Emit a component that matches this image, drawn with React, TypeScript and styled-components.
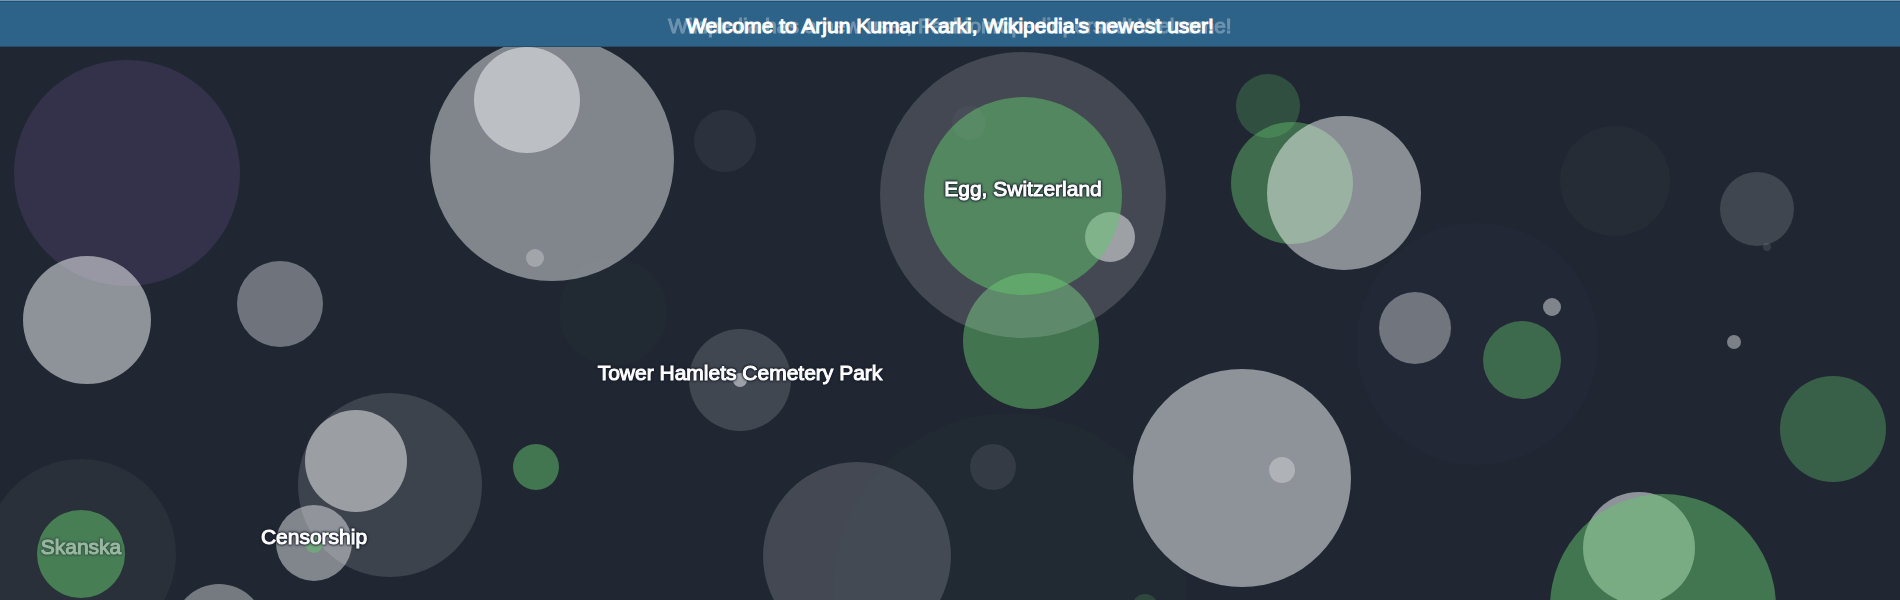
import React from "react";
import styled, { createGlobalStyle } from "styled-components";

const BAR_HEIGHT = 47;

const palette = {
  edit: "#fcfeff",
  anon: "#64c66e",
  bot: "#8f6cbc",
};

type Kind = keyof typeof palette;

interface Edit {
  kind: Kind;
  x: number;
  y: number;
  r: number;
  alpha: number;
  title?: string;
  fade?: number;
}

const edit = (kind: Kind, x: number, y: number, r: number, alpha: number, title?: string, fade?: number): Edit => ({
  kind, x, y, r, alpha, title, fade,
});

// Oldest first, so that later bubbles are painted over earlier ones.
const edits: Edit[] = [
  edit("anon", 613, 312, 54, 0.014),
  edit("anon", 1010, 590, 177, 0.016),
  edit("bot", 1477, 344, 121, 0.032),
  edit("edit", 1615, 181, 55, 0.022),
  edit("bot", 127, 173, 113, 0.18),
  edit("edit", 87, 320, 64, 0.5),
  edit("edit", 280, 304, 43, 0.36),
  edit("edit", 552, 159, 122, 0.44),
  edit("edit", 527, 100, 53, 0.48),
  edit("edit", 535, 258, 9, 0.27),
  edit("edit", 725, 141, 31, 0.055),
  edit("anon", 1031, 341, 68, 0.49),
  edit("edit", 1023, 195, 143, 0.155),
  edit("edit", 1110, 237, 25, 0.485),
  edit("anon", 1023, 196, 99, 0.5, "Egg, Switzerland"),
  edit("edit", 969, 123, 17, 0.03),
  edit("anon", 1268, 106, 32, 0.26),
  edit("anon", 1292, 183, 61, 0.44),
  edit("edit", 1344, 193, 77, 0.48),
  edit("edit", 1415, 328, 36, 0.36),
  edit("edit", 1552, 307, 9, 0.43),
  edit("anon", 1522, 360, 39, 0.41),
  edit("edit", 1757, 209, 37, 0.145),
  edit("edit", 1767, 247, 4, 0.1),
  edit("edit", 1734, 342, 7, 0.42),
  edit("anon", 1833, 429, 53, 0.36),
  edit("edit", 1639, 548, 56, 0.5),
  edit("anon", 1663, 607, 113, 0.5),
  edit("edit", 1242, 478, 109, 0.5),
  edit("edit", 1282, 470, 13, 0.3),
  edit("edit", 993, 467, 23, 0.085),
  edit("anon", 1145, 607, 13, 0.2),
  edit("edit", 857, 556, 94, 0.155),
  edit("edit", 740, 380, 51, 0.15),
  edit("edit", 740, 380, 7, 0.5, "Tower Hamlets Cemetery Park"),
  edit("anon", 536, 467, 23, 0.5),
  edit("edit", 390, 485, 92, 0.135),
  edit("edit", 356, 461, 51, 0.49),
  edit("edit", 314, 543, 38, 0.44),
  edit("anon", 314, 544, 9, 0.5, "Censorship"),
  edit("edit", 81, 554, 95, 0.045),
  edit("anon", 81, 554, 44, 0.52, "Skanska", 0.45),
  edit("edit", 219, 630, 46, 0.39),
];

const GlobalStyle = createGlobalStyle`
  body {
    margin: 0;
    background: #202732;
    font-family: Helvetica, "Liberation Sans", Arial, sans-serif;
  }
`;

const Page = styled.div`
  display: flex;
  flex-direction: column;
  height: 100vh;
  overflow: hidden;
`;

const NewsBar = styled.header`
  display: grid;
  flex: none;
  align-items: center;
  justify-items: center;
  box-sizing: border-box;
  height: ${BAR_HEIGHT}px;
  padding-top: 4px;
  background: #2e6389;
  border-top: 1px solid #7396af;
  border-bottom: 1px solid #264c6b;
  box-shadow: inset 0 1px #1b527c;
`;

const Message = styled.a<{ $leaving?: boolean }>`
  grid-area: 1 / 1;
  color: #fff;
  font-size: 21px;
  line-height: 24px;
  white-space: nowrap;
  text-decoration: none;
  -webkit-text-stroke: 1px #fff;
  opacity: ${({ $leaving }) => ($leaving ? 0.3 : 1)};
`;

const Canvas = styled.svg`
  display: block;
  flex: 1;
  width: 100%;
  min-height: 0;
`;

const Bubble = styled.circle<{ $kind: Kind }>`
  fill: ${({ $kind }) => palette[$kind]};
`;

const Title = styled.text`
  fill: #fff;
  stroke: #fff;
  stroke-width: 1px;
  font-size: 21px;
  text-anchor: middle;
  filter: drop-shadow(0 0 1px #161b2a) drop-shadow(0 0 1px #161b2a);
`;

export default function App() {
  return (
    <Page>
      <GlobalStyle />
      <NewsBar>
        <Message href="#previous" $leaving>
          Wikipedia has a new user, Fashionropedinpersod! Welcome!
        </Message>
        <Message href="#newest">Welcome to Arjun Kumar Karki, Wikipedia's newest user!</Message>
      </NewsBar>
      <Canvas>
        <g transform={`translate(0 ${-BAR_HEIGHT})`}>
          {edits.map((e, i) => (
            <Bubble key={i} $kind={e.kind} cx={e.x} cy={e.y} r={e.r} fillOpacity={e.alpha} />
          ))}
          {edits
            .filter((e) => e.title)
            .map((e) => (
              <a key={e.title} href={`#${e.title}`} opacity={e.fade ?? 1}>
                <Title x={e.x} y={e.y}>{e.title}</Title>
              </a>
            ))}
        </g>
      </Canvas>
    </Page>
  );
}
